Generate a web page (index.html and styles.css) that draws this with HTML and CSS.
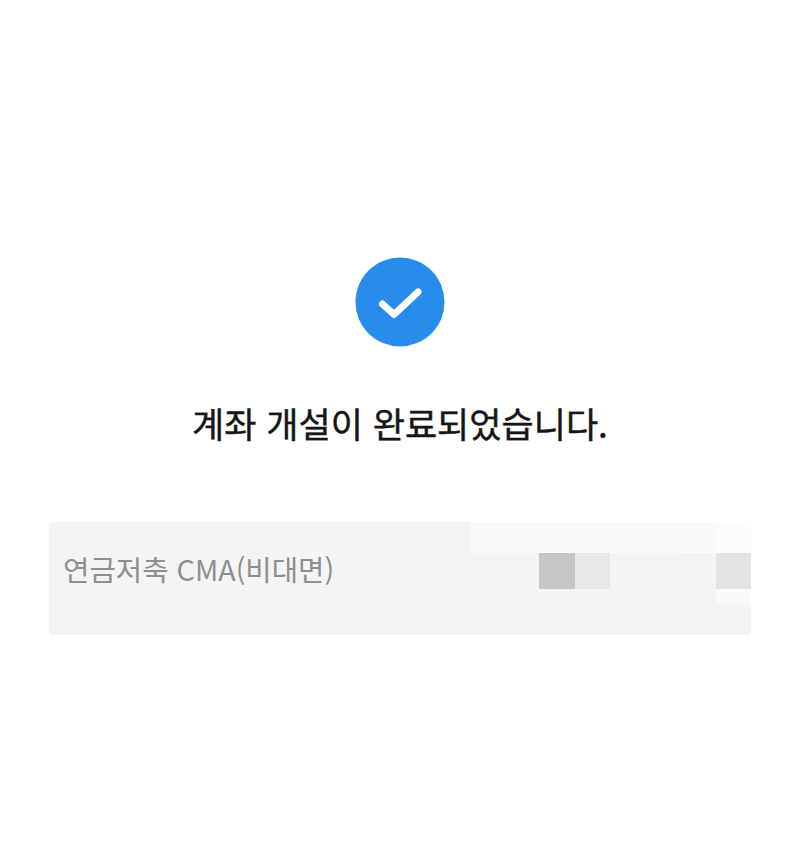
FILE: index.html
```html
<!DOCTYPE html>
<html lang="ko">
<head>
<meta charset="utf-8">
<title>계좌 개설 완료</title>
<link rel="stylesheet" href="styles.css">
</head>
<body>
<main class="page">
  <svg class="check" viewBox="0 0 90 90" width="90" height="90" aria-hidden="true">
    <circle cx="45" cy="45" r="44.5" fill="#278ceb"/>
    <path d="M27.5 47 L39 57.5 L63 35" fill="none" stroke="#fff" stroke-width="7" stroke-linecap="round" stroke-linejoin="round"/>
  </svg>
  <h1 class="title">계좌 개설이 완료되었습니다.</h1>
  <section class="card">
    <p class="account">연금저축 CMA(비대면)</p>
    <div class="mosaic" aria-hidden="true">
      <span class="m m-top"></span>
      <span class="m m-corner"></span>
      <span class="m m-dark"></span>
      <span class="m m-mid"></span>
      <span class="m m-faint"></span>
      <span class="m m-right"></span>
      <span class="m m-low"></span>
    </div>
  </section>
</main>
</body>
</html>
```
FILE: styles.css
```css
html, body { margin: 0; padding: 0; background: #fff; }
body { font-family: "Noto Sans CJK KR", "Noto Sans", sans-serif; }
.page { display: flex; flex-direction: column; align-items: center; padding-top: 257px; height: 600px; }
.check { display: block; }
.title { margin: 52px 0 0; font-size: 35px; font-weight: 400; line-height: 48px; color: #161616; letter-spacing: 0; -webkit-text-stroke: 0.45px #161616; }
.card { position: relative; box-sizing: border-box; align-self: stretch; margin: 75px 49px 0; height: 113px; padding: 25px 14px 23px; background: #f4f4f4; border-radius: 4px; overflow: hidden; }
.account { margin: 0; font-size: 28.7px; font-weight: 400; line-height: 44px; color: #8f8f8f; }
.mosaic { position: absolute; inset: 0; }
.m { position: absolute; display: block; }
.m-top { left: 421px; top: 0; width: 246px; height: 31px; background: #fafafa; }
.m-corner { left: 667px; top: 0; width: 35px; height: 31px; background: #fcfcfc; }
.m-dark { left: 490px; top: 31px; width: 36px; height: 36px; background: #c6c6c6; }
.m-mid { left: 526px; top: 31px; width: 35px; height: 36px; background: #e8e8e8; }
.m-faint { left: 631px; top: 31px; width: 36px; height: 36px; background: #f3f3f3; }
.m-right { left: 667px; top: 31px; width: 35px; height: 36px; background: #e3e3e3; }
.m-low { left: 667px; top: 67px; width: 35px; height: 16px; background: #fafafa; }
```
